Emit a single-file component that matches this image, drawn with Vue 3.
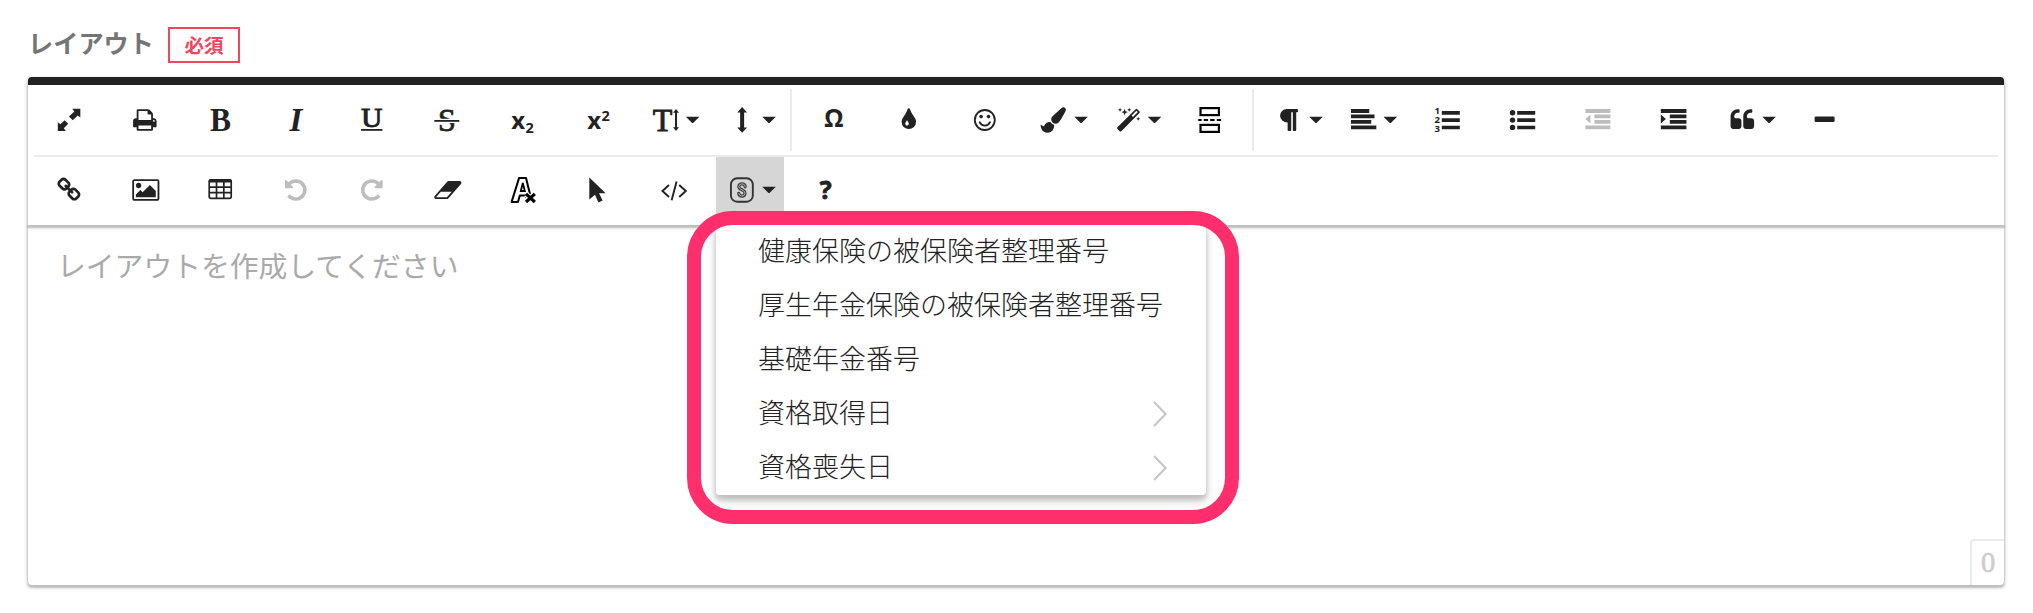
<script setup>
// Every icon is drawn around (0,0), the centre of its toolbar cell.
const fa = (d, x = 0, extra = '') =>
  `<g transform="translate(${x} 0) scale(${extra === 'flip' ? '-.01413' : '.01413'} .01413) translate(-896 -896)"><path d="${d}"/></g>`
const serif = 'font-family="Liberation Serif, serif"'
const sans = 'font-family="Open Sans, sans-serif" font-weight="700"'

const undoPath = 'M1664 896q0 156-61 298t-164 245-245 164-298 61q-172 0-327-72.5t-264-204.5q-7-10-6.5-22.5t8.5-20.5l137-138q10-9 25-9 16 2 23 12 73 95 179 147t225 52q104 0 198.5-40.5t163.5-109.5 109.5-163.5 40.5-198.5-40.5-198.5-109.5-163.5-163.5-109.5-198.5-40.5q-98 0-188 35.5t-160 101.5l137 138q31 30 14 69-17 40-59 40h-448q-26 0-45-19t-19-45v-448q0-42 40-59 39-17 69 14l130 129q107-101 244.5-156.5t284.5-55.5q156 0 298 61t245 164 164 245 61 298z'
const quoteMark = 'M832 960v384q0 80-56 136t-136 56h-384q-80 0-136-56t-56-136v-704q0-104 40.5-198.5t109.5-163.5 163.5-109.5 198.5-40.5h64q26 0 45 19t19 45v128q0 26-19 45t-45 19h-64q-106 0-181 75t-75 181v32q0 40 28 68t68 28h224q80 0 136 56t56 136z'
const arrowHalf = 'M3.2 -11H11.2V-2.2L8.6 -4.2L3.6 .6L-.2 -3.2L5.2 -8.2Z'
const arrowTail = 'M-3.2 11H-11.2V2.2L-8.6 4.2L-4.4 .2L-.8 3.8L-5.2 8.2Z'

const groups = [
  [
    { id: 'fullscreen', icon: `<path d="${arrowHalf}" transform="translate(.3 -.3)"/><path d="${arrowTail}" transform="translate(.2 0)"/>` },
    { id: 'print', icon: fa('M384 1536h896v-256h-896v256zM384 896h896v-384h-160q-40 0-68-28t-28-68v-160h-640v640zM1536 960q0-26-19-45t-45-19-45 19-19 45 19 45 45 19 45-19 19-45zM1664 960v416q0 13-9.5 22.5t-22.5 9.5h-224v160q0 40-28 68t-68 28h-960q-40 0-68-28t-28-68v-160h-224q-13 0-22.5-9.5t-9.5-22.5v-416q0-79 56.5-135.5t135.5-56.5h64v-544q0-40 28-68t68-28h672q40 0 88 20t76 48l152 152q28 28 48 76t20 88v256h64q79 0 135.5 56.5t56.5 135.5z', 0.9) },
    { id: 'bold', icon: `<text x=".6" y="10.8" text-anchor="middle" ${serif} font-weight="700" font-size="33" textLength="21" lengthAdjust="spacingAndGlyphs">B</text>` },
    { id: 'italic', icon: `<text x="0" y="10.8" text-anchor="middle" ${serif} font-weight="700" font-style="italic" font-size="33">I</text>` },
    { id: 'underline', icon: `<text x="0" y="6.5" text-anchor="middle" ${serif} font-size="26.5" textLength="21" lengthAdjust="spacingAndGlyphs" stroke="#222" stroke-width="1">U</text><rect x="-10.8" y="9" width="21.4" height="1.8"/>` },
    { id: 'strike', icon: `<text x="0" y="10.6" text-anchor="middle" ${serif} font-size="32" stroke="#222" stroke-width=".8">S</text><rect x="-12.5" y="-1.2" width="25" height="4.2" fill="#fff"/><rect x="-12.5" y="0" width="25" height="1.8"/>` },
    { id: 'sub', icon: `<text x="-11.6" y="9.4" ${sans} font-size="24">x</text><text x="2.8" y="12.7" ${sans} font-size="14.5">2</text>` },
    { id: 'sup', icon: `<text x="-11.6" y="9.4" ${sans} font-size="24">x</text><text x="2.6" y="0.7" ${sans} font-size="14.5">2</text>` },
    { id: 'size', caret: 18.8, icon: `<text x="-11.2" y="10.8" text-anchor="middle" ${serif} font-size="32" stroke="#222" stroke-width=".9">T</text><path d="M2.2 -11L5.2 -7.2H3.2V7.2H5.2L2.2 11L-.8 7.2H1.2V-7.2H-.8Z"/>` },
    { id: 'line-height', caret: 19.2, icon: '<path d="M-7.7 -13L-2.8 -7.6H-5.7V7.4H-2.8L-7.7 12.8L-12.6 7.4H-9.7V-7.6H-12.6Z"/>' },
  ],
  [
    { id: 'special', icon: `<text x="0" y="7.2" text-anchor="middle" ${sans} font-size="24.5">Ω</text>` },
    { id: 'color', icon: fa('M896 1152q0-36-20-69-1-1-15.5-22.5t-25.5-38-25-44-21-50.5q-4-16-21-16t-21 16q-7 23-21 50.5t-25 44-25.5 38-15.5 22.5q-20 33-20 69 0 53 37.5 90.5t90.5 37.5 90.5-37.5 37.5-90.5zm512-128q0 212-150 362t-362 150-362-150-150-362q0-145 81-275 6-9 62.5-90.5t101-151 99.5-178 83-201.5q9-30 34-47t51-17 51.5 17 33.5 47q28 93 83 201.5t99.5 178 101 151 62.5 90.5q81 127 81 275z') },
    { id: 'emoji', icon: '<circle cx="0" cy="0" r="10" fill="none" stroke="#222" stroke-width="1.8"/><circle cx="-3.7" cy="-3.4" r="1.8"/><circle cx="3.7" cy="-3.4" r="1.8"/><path d="M-5.2 2.2Q-3.6 5.6 0 5.6T5.2 2.2" fill="none" stroke="#222" stroke-width="1.8" stroke-linecap="round"/>' },
    { id: 'inline-style', caret: 20.3, icon: fa('M1615 0q70 0 122.5 46.5t52.5 116.5q0 63-45 151-332 629-465 752-97 91-218 91-126 0-216.5-92.5t-90.5-219.5q0-128 92-212l638-579q59-54 130-54zm-909 1034q39 76 106.5 130t150.5 76l1 71q4 213-129.5 347t-348.5 134q-123 0-218-46.5t-152.5-127.5-86.5-183-29-220q7 5 41 30t62 44.5 59 36.5 46 17q41 0 55-37 25-66 57.5-112.5t69.5-76 88-47.5 103-25.5 125-10.5z', -7.6) },
    { id: 'magic', caret: 18.7, icon: '<g transform="translate(-7.6 0) rotate(-45)"><rect x="-14" y="-2.4" width="28" height="5.4" rx="1.2"/><rect x="5.6" y="-.8" width="6.8" height="2" fill="#fff"/></g><path d="M-11.2 -11.2L-10.3 -8.8L-7.9 -7.9L-10.3 -7L-11.2 -4.6L-12.1 -7L-14.5 -7.9L-12.1 -8.8ZM-15.8 -12.2L-15.2 -10.8L-13.8 -10.2L-15.2 -9.6L-15.8 -8.2L-16.4 -9.6L-17.8 -10.2L-16.4 -10.8ZM-6.6 -12.2L-6 -10.8L-4.6 -10.2L-6 -9.6L-6.6 -8.2L-7.2 -9.6L-8.6 -10.2L-7.2 -10.8ZM2.4 -3.2L3 -1.8L4.4 -1.2L3 -.6L2.4 .8L1.8 -.6L.4 -1.2L1.8 -1.8Z"/>' },
    { id: 'page-break', icon: '<g fill="none" stroke="#000" stroke-width="2.2"><rect x="-11.3" y="-11.9" width="18.4" height="7"/><rect x="-11.3" y="4.9" width="18.4" height="7"/><path d="M-13.6 0H9.8" stroke-dasharray="4.4 2.1" stroke-dashoffset="1"/></g>' },
  ],
  [
    { id: 'paragraph', caret: 20.2, icon: '<path d="M-9 -11H1.2Q2.2 -11 2.2 -10V-8.6Q2.2 -7.8 1.2 -7.8H.4V10Q.4 11 -.6 11H-2.2Q-3 11 -3 10V-7.8H-4.6V10Q-4.6 11 -5.6 11H-7.2Q-8.2 11 -8.2 10V2.6Q-11.4 2.4 -13.6 .4T-15.8 -4.2Q-15.8 -7.2 -13.8 -9.1T-9 -11Z"/>' },
    { id: 'align', caret: 19.5, icon: '<path d="M-19.8 -11h18.2v4h-18.2zM-19.8 -5.5h23.5v3.8h-23.5zM-19.8 0h20.2v3.8h-20.2zM-19.8 5.4h25.3v3.9h-25.3z"/>' },
    { id: 'ol', icon: `<path d="M-5 -9H13v3.7H-5zM-5 -1.7H13v3.7H-5zM-5 5.7H13v3.6H-5z"/><g ${sans} font-size="9.6"><text x="-12.4" y="-5.6">1</text><text x="-12.4" y="3.4">2</text><text x="-12.4" y="12.4">3</text></g>` },
    { id: 'ul', icon: '<path d="M-5.6 -9H12.4v3.7H-5.6zM-5.6 -1.7H12.4v3.7H-5.6zM-5.6 5.7H12.4v3.6H-5.6z"/><circle cx="-10.3" cy="-7.2" r="2.7"/><circle cx="-10.3" cy=".1" r="2.7"/><circle cx="-10.3" cy="7.4" r="2.7"/>' },
    { id: 'outdent', off: true, icon: '<path d="M-12.4 -11h25v4h-25zM-3.4 -5.5h16v3.8h-16zM-3.4 0h16v3.8h-16zM-12.4 5.4h25v3.9h-25zM-12.4 -1L-7.4 -5.6V3.6Z"/>' },
    { id: 'indent', icon: '<path d="M-13 -11h25.6v4h-25.6zM-4 -5.5h16.6v3.8h-16.6zM-4 0h16.6v3.8h-16.6zM-13 5.4h25.6v3.9h-25.6zM-8 -1L-13 -5.6V3.6Z"/>' },
    { id: 'quote', caret: 19.3, icon: fa(quoteMark, -7.5) + fa(quoteMark, 5.2) },
    { id: 'hr', icon: '<rect x="-10.2" y="-3.6" width="20" height="5.6" rx="1.3"/>' },
  ],
]

const secondRow = [
  { id: 'link', icon: fa('M1456 1216q0-40-28-68l-208-208q-28-28-68-28-42 0-72 32 3 3 19 18.5t21.5 21.5 15 19 13 25.5 3.5 27.5q0 40-28 68t-68 28q-15 0-27.5-3.5t-25.5-13-19-15-21.5-21.5-18.5-19q-33 31-33 73 0 40 28 68l206 207q27 27 68 27 40 0 68-26l147-146q28-28 28-67zm-703-705q0-40-28-68l-206-207q-28-28-68-28-39 0-68 27l-147 146q-28 28-28 67 0 40 28 68l208 208q27 27 68 27 42 0 72-31-3-3-19-18.5t-21.5-21.5-15-19-13-25.5-3.5-27.5q0-40 28-68t68-28q15 0 27.5 3.5t25.5 13 19 15 21.5 21.5 18.5 19q33-31 33-73zm895 705q0 120-85 203l-147 146q-83 83-203 83-121 0-204-85l-206-207q-83-83-83-203 0-123 88-209l-88-88q-86 88-208 88-120 0-204-84l-208-208q-84-84-84-204t85-203l147-146q83-83 203-83 121 0 204 85l206 207q83 83 83 203 0 123-88 209l88 88q86-88 208-88 120 0 204 84l208 208q84 84 84 204z', 1) },
  { id: 'image', icon: fa('M576 576q0 80-56 136t-136 56-136-56-56-136 56-136 136-56 136 56 56 136zm1024 384v448h-1408v-192l320-320 160 160 512-512zm96-704h-1600q-13 0-22.5 9.5t-9.5 22.5v1216q0 13 9.5 22.5t22.5 9.5h1600q13 0 22.5-9.5t9.5-22.5v-1216q0-13-9.5-22.5t-22.5-9.5zm160 32v1216q0 66-47 113t-113 47h-1600q-66 0-113-47t-47-113v-1216q0-66 47-113t113-47h1600q66 0 113 47t47 113z', 1) },
  { id: 'table', icon: '<g fill="none" stroke="#222" stroke-width="1.7"><rect x="-10.6" y="-10.1" width="22" height="18.4" rx="1.8"/><path d="M-3.3 -8V8M4 -8V8M-10.6 -2.8H11.4M-10.6 2.7H11.4"/></g><path d="M-11 -9.3Q-11 -10.9 -9.5 -10.9H10.3Q11.8 -10.9 11.8 -9.3V-7.4H-11Z"/>' },
  { id: 'undo', off: true, icon: fa(undoPath) },
  { id: 'redo', off: true, icon: fa(undoPath, 0, 'flip') },
  { id: 'eraser', icon: fa('M832 1408l336-384h-768l-336 384h768zm1013-1077q15 34 9.5 71.5t-30.5 65.5l-896 1024q-38 44-96 44h-768q-38 0-69.5-20.5t-47.5-54.5q-15-34-9.5-71.5t30.5-65.5l896-1024q38-44 96-44h768q38 0 69.5 20.5t47.5 54.5z', 1) },
  { id: 'clear', icon: '<path d="M-11.2 11.9L-3.8 -11.9H3.2L7.4 5L4 9L3 5.6H-3L-4.8 11.9Z" fill="#fff" stroke="#000" stroke-width="2" stroke-linejoin="round"/><path d="M-2 1L0 -7L2 1Z" fill="#fff" stroke="#000" stroke-width="1.8"/><path d="M3.4 4.2L11.6 11.6M11.6 4.2L3.4 11.6" stroke="#fff" stroke-width="5.5"/><path d="M3.2 3.8L12 12M12 3.8L3.2 12" stroke="#000" stroke-width="3.2"/>' },
  { id: 'select', icon: '<path d="M-9.5 -12.6L6.8 3.2H.2L3.8 10.6L-.4 12.4L-3.8 4.8L-9.5 9.4Z"/>' },
  { id: 'code', icon: '<path d="M-4.8 -5L-11.4 1L-4.8 7M5.4 -5L12 1L5.4 7M2.8 -8.6L-2.2 10.2" fill="none" stroke="#222" stroke-width="1.9"/>' },
  { id: 'fields', caret: 19.2, active: true, icon: '<rect x="-18.9" y="-11.7" width="21.9" height="23.4" rx="6.2" fill="none" stroke="#333" stroke-width="1.9"/><g fill="none" stroke-linecap="round" stroke-linejoin="round"><path d="M-4.7 -3.2V-3.8Q-5.2 -6.2 -7.9 -6.2T-11 -3.4Q-11 -1.6 -9 -.8L-6.8 .4Q-4.8 1.4 -4.8 3.2Q-5.2 6.1 -7.9 6.1T-11.1 3.4" stroke="#3c3c3c" stroke-width="3.2"/><path d="M-4.7 -3.2V-3.8Q-5.2 -6.2 -7.9 -6.2T-11 -3.4Q-11 -1.6 -9 -.8L-6.8 .4Q-4.8 1.4 -4.8 3.2Q-5.2 6.1 -7.9 6.1T-11.1 3.4" stroke="#b4b4b4" stroke-width="1"/></g>' },
  { id: 'help', icon: `<text x="0" y="8.8" text-anchor="middle" ${sans} font-size="25" stroke="#222" stroke-width=".8">?</text>` },
]

const menu = [
  { label: '健康保険の被保険者整理番号' },
  { label: '厚生年金保険の被保険者整理番号' },
  { label: '基礎年金番号' },
  { label: '資格取得日', sub: true },
  { label: '資格喪失日', sub: true },
]
const caretPath = (x) => `M${x - 6.8} -3.2H${x + 6.8}L${x + 1} 2.6Q${x} 3.6 ${x - 1} 2.6Z`
</script>

<template>
  <main class="page">
    <header class="field-head">
      <span class="label">レイアウト</span>
      <span class="required">必須</span>
    </header>

    <section class="editor">
      <div class="toolbar">
        <div class="row first">
          <div v-for="(group, g) in groups" :key="g" class="group">
            <button v-for="b in group" :key="b.id" class="cell" :class="{ off: b.off }" type="button">
              <svg viewBox="-37.825 -33 75.65 66">
                <g v-html="b.icon"></g>
                <path v-if="b.caret" :d="caretPath(b.caret)" />
              </svg>
            </button>
          </div>
        </div>
        <div class="row second">
          <button v-for="b in secondRow" :key="b.id" class="cell" :class="{ off: b.off, active: b.active }" type="button">
            <svg viewBox="-37.825 -33 75.65 66">
              <g v-html="b.icon"></g>
              <path v-if="b.caret" :d="caretPath(b.caret)" />
            </svg>
          </button>
        </div>
      </div>

      <div class="content">
        <p class="placeholder">レイアウトを作成してください</p>
        <span class="counter">0</span>
      </div>

      <ul class="menu">
        <li v-for="m in menu" :key="m.label">
          <span>{{ m.label }}</span>
          <svg v-if="m.sub" class="chevron" viewBox="0 0 14 26"><path d="M1 1L12.6 13L1 25" /></svg>
        </li>
      </ul>
      <div class="highlight"></div>
    </section>
  </main>
</template>

<style>
body { background: #fff; }
</style>

<style scoped>
.page {
  box-sizing: border-box;
  width: 2033px;
  height: 613px;
  padding: 27px 29px 0 28px;
  background: #fff;
  font-family: "Liberation Sans", "Noto Sans CJK JP", sans-serif;
  overflow: hidden;
}
.field-head {
  display: flex;
  align-items: flex-start;
  height: 50px;
}
.label {
  width: 140px;
  font-size: 25.2px;
  line-height: 34px;
  font-weight: 700;
  color: #757575;
  white-space: nowrap;
}
.required {
  box-sizing: border-box;
  width: 72px;
  height: 36px;
  border: 2px solid #f2455f;
  color: #f2455f;
  font-size: 19.5px;
  font-weight: 700;
  line-height: 34px;
  text-align: center;
}
.editor {
  position: relative;
  width: 1976px;
}
.toolbar {
  position: relative;
  z-index: 1;
  box-sizing: border-box;
  height: 148px;
  border-top: 8px solid #222;
  border-radius: 4px 4px 0 0;
  background: #fff;
  box-shadow: 0 2px 6px rgba(0, 0, 0, 0.12), 0 2px 2px 1px rgba(0, 0, 0, 0.2);
}
.row { display: flex; }
.first {
  box-sizing: border-box;
  height: 72px;
  margin: 0 6px;
  padding: 2px 0 0;
  border-bottom: 2px solid #ebebeb;
}
.second {
  height: 68px;
  padding-left: 3.2px;
}
.group {
  position: relative;
  display: flex;
  margin-left: 8.2px;
}
.group:first-child { margin-left: -2.8px; }
.group + .group::before {
  content: "";
  position: absolute;
  left: -6px;
  top: 2px;
  width: 2px;
  height: 62px;
  background: #ebebeb;
}
.cell {
  flex: none;
  width: 75.65px;
  height: 66px;
  padding: 0;
  border: 0;
  background: none;
  color: #222;
}
.cell svg {
  display: block;
  width: 75.65px;
  height: 66px;
  fill: #222;
}
.off svg { fill: #bdbdbd; }
.active {
  height: 68px;
  background: linear-gradient(#d6d6d6, #d6d6d6) 4px 0 / 68px 68px no-repeat;
}
.active svg { height: 66px; margin-bottom: 2px; }
.content {
  position: relative;
  height: 360px;
  border-radius: 0 0 4px 4px;
  background: #fff;
  box-shadow: 0 2px 6px rgba(0, 0, 0, 0.12), 0 2px 2px 1px rgba(0, 0, 0, 0.2);
}
.placeholder {
  margin: 0;
  padding: 21px 29px;
  font-size: 28.8px;
  line-height: 42px;
  color: #aaa;
}
.counter {
  position: absolute;
  right: 0;
  bottom: 0;
  box-sizing: border-box;
  width: 34px;
  height: 46px;
  border: solid #ebebeb;
  border-width: 2px 0 0 2px;
  border-radius: 4px 0 0 0;
  color: #ccc;
  font: 28.5px/43px "Liberation Serif", serif;
  -webkit-text-stroke: 0.6px #ccc;
  text-align: center;
}
.menu {
  position: absolute;
  z-index: 2;
  left: 688px;
  top: 148px;
  box-sizing: border-box;
  width: 490px;
  height: 270px;
  margin: 0;
  padding: 0 39px 0 42px;
  list-style: none;
  background: #fff;
  border-radius: 0 0 4px 4px;
  box-shadow: 0 6px 12px rgba(0, 0, 0, 0.16), 0 4px 4px 1px rgba(0, 0, 0, 0.14);
}
.menu li {
  display: flex;
  align-items: center;
  justify-content: space-between;
  height: 54px;
  font-size: 27px;
  font-weight: 300;
  line-height: 54px;
  color: #222;
  white-space: nowrap;
}
.chevron {
  width: 14px;
  height: 26px;
  fill: none;
  stroke: #c4c4c4;
  stroke-width: 2;
}
.highlight {
  position: absolute;
  z-index: 3;
  left: 659px;
  top: 134px;
  box-sizing: border-box;
  width: 552px;
  height: 313px;
  border: 14px solid #ff2e6c;
  border-radius: 46px;
}
</style>
